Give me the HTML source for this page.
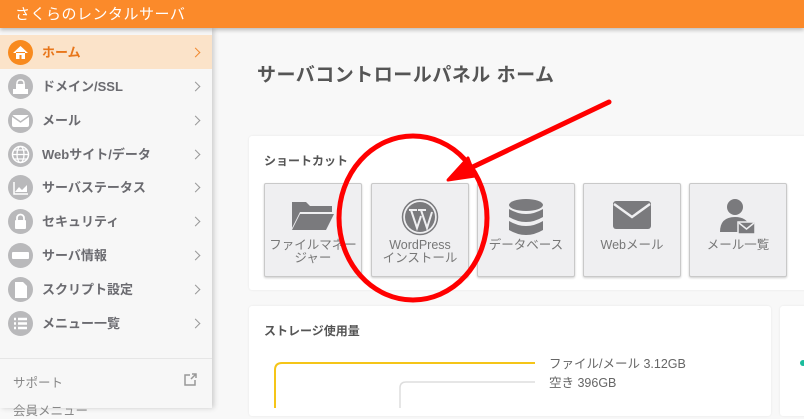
<!DOCTYPE html>
<html><head><meta charset="utf-8"><style>
*{margin:0;padding:0;box-sizing:border-box}
body{width:804px;height:408px;overflow:hidden;background:#f8f8f8;font-family:"Liberation Sans","Noto Sans CJK JP",sans-serif;position:relative}
.hd{position:absolute;left:0;top:0;width:804px;height:28px;background:#fb8a2a;box-shadow:0 2px 4px rgba(0,0,0,.25);z-index:3}
.hd span{position:absolute;left:15px;top:3px;color:#fff;font-size:15px;letter-spacing:.5px}
.sb{position:absolute;left:0;top:28px;width:212px;height:380px;background:#f7f7f7;box-shadow:2px 0 5px rgba(0,0,0,.18);z-index:2}
.it{position:absolute;left:0;width:212px;height:34px}
.it .ic{position:absolute;left:8px;top:5px;width:25px;height:25px;border-radius:50%;background:#b9b9bb}
.it .ic svg{position:absolute;left:0;top:0}
.it .tx{position:absolute;left:42px;top:7px;font-size:13px;font-weight:bold;color:#6b6b70}
.it .ch{position:absolute;left:192px;top:14px;width:7px;height:7px;border-top:1.5px solid #999;border-right:1.5px solid #999;transform:rotate(45deg)}
.it.on{background:#fbe3c9}
.it.on .ic{background:#f88a1e}.it.on .tx{color:#e8761a}.it.on .ch{border-color:#f08a30}
h1{position:absolute;left:257px;top:60px;font-size:19px;color:#555;font-weight:bold;letter-spacing:.5px}
.card{position:absolute;background:#fff;border-radius:3px;box-shadow:0 0 2px rgba(0,0,0,.08)}
.ct{position:absolute;font-size:12px;font-weight:bold;color:#555}
.bt{position:absolute;top:183px;width:98px;height:94px;background:#efeff1;border:1px solid #c9c9c9;border-radius:2px;box-shadow:0 1px 2px rgba(0,0,0,.2);text-align:center}
.bt svg{position:absolute;left:50%;transform:translateX(-50%);top:14px}
.bt .l{position:absolute;left:0;right:0;top:55px;font-size:12.5px;line-height:13px;color:#777}
</style></head><body>
<div class="hd"><span>さくらのレンタルサーバ</span></div>
<div class="sb">
<div class="it on" style="top:7px"><div class="ic"><svg width="25" height="25"><path d="M5 13L12.5 6L20 13M8 12v7h3.5v-4h2v4H17v-7" fill="#fff"/></svg></div><div class="tx">ホーム</div><div class="ch"></div></div>
<div class="it" style="top:41px"><div class="ic"><svg width="25" height="25"><rect x="9" y="6" width="7" height="7" rx="3" fill="none" stroke="#fff" stroke-width="1.5"/><rect x="8" y="10" width="9" height="5" fill="#fff"/><rect x="5" y="15" width="15" height="5" fill="#fff"/></svg></div><div class="tx">ドメイン/SSL</div><div class="ch"></div></div>
<div class="it" style="top:75px"><div class="ic"><svg width="25" height="25"><rect x="4" y="7" width="17" height="12" rx="2" fill="#fff"/><path d="M4 8l8.5 6L21 8" fill="none" stroke="#b9b9bb" stroke-width="1.5"/></svg></div><div class="tx">メール</div><div class="ch"></div></div>
<div class="it" style="top:109px"><div class="ic"><svg width="25" height="25"><circle cx="12.5" cy="12.5" r="8" fill="none" stroke="#fff" stroke-width="1.5"/><ellipse cx="12.5" cy="12.5" rx="3.5" ry="8" fill="none" stroke="#fff" stroke-width="1.3"/><path d="M4.5 12.5h16M6 8h13M6 17h13" stroke="#fff" stroke-width="1.3"/></svg></div><div class="tx">Webサイト/データ</div><div class="ch"></div></div>
<div class="it" style="top:142px"><div class="ic"><svg width="25" height="25"><path d="M6 7v12h14" fill="none" stroke="#fff" stroke-width="1.5"/><path d="M7 17l4-5 3 3 5-5v7H7z" fill="#fff"/></svg></div><div class="tx">サーバステータス</div><div class="ch"></div></div>
<div class="it" style="top:176px"><div class="ic"><svg width="25" height="25"><path d="M9 12V9a3.5 3.5 0 0 1 7 0v3" fill="none" stroke="#fff" stroke-width="1.8"/><rect x="7" y="11" width="11" height="9" rx="1" fill="#fff"/></svg></div><div class="tx">セキュリティ</div><div class="ch"></div></div>
<div class="it" style="top:210px"><div class="ic"><svg width="25" height="25"><rect x="4" y="9" width="17" height="7" rx="1" fill="#fff"/></svg></div><div class="tx">サーバ情報</div><div class="ch"></div></div>
<div class="it" style="top:244px"><div class="ic"><svg width="25" height="25"><path d="M7 5h8l4 4v12H7z" fill="#fff"/></svg></div><div class="tx">スクリプト設定</div><div class="ch"></div></div>
<div class="it" style="top:278px"><div class="ic"><svg width="25" height="25"><path d="M6 8h2M6 12.5h2M6 17h2M10 8h9M10 12.5h9M10 17h9" stroke="#fff" stroke-width="2.5"/></svg></div><div class="tx">メニュー一覧</div><div class="ch"></div></div>
<div style="position:absolute;left:0;top:330px;width:212px;border-top:1px solid #e6e6e6"></div>
<div style="position:absolute;left:13px;top:344px;font-size:12.5px;color:#888">サポート</div>
<div style="position:absolute;left:13px;top:372px;font-size:12.5px;color:#888">会員メニュー</div>
<svg style="position:absolute;left:183px;top:345px" width="14" height="14"><path d="M7 2H2v10h10V7M8 6l5-5M9 1h4v4" fill="none" stroke="#999" stroke-width="1.5"/></svg>
</div>
<h1>サーバコントロールパネル ホーム</h1>
<div class="card" style="left:249px;top:136px;width:560px;height:154px"></div>
<div class="ct" style="left:264px;top:152px">ショートカット</div>
<div class="bt" style="left:264px"><svg width="46" height="34"><path d="M2 4h14l4 4h22v6H10L2 30z" fill="#7a7a7d"/><path d="M10 16h34l-8 16H2z" fill="#7a7a7d"/></svg><div class="l">ファイルマネー<br>ジャー</div></div>
<div class="bt" style="left:371px"><svg width="38" height="38" viewBox="0 0 38 38"><circle cx="19" cy="19" r="17.5" fill="none" stroke="#7a7a7d" stroke-width="1.5"/><circle cx="19" cy="19" r="15" fill="#7a7a7d"/><path d="M8 12h8M10 12l6 18 4-12M17 12h8M20 12l6 18 5-16" fill="none" stroke="#efeff1" stroke-width="2"/></svg><div class="l">WordPress<br>インストール</div></div>
<div class="bt" style="left:477px"><svg width="36" height="40"><ellipse cx="18" cy="7" rx="17" ry="6" fill="#7a7a7d"/><path d="M1 11q17 10 34 0v8q-17 10-34 0zM1 23q17 10 34 0v9q-17 10-34 0z" fill="#7a7a7d"/></svg><div class="l">データベース</div></div>
<div class="bt" style="left:583px"><svg width="40" height="32"><rect x="1" y="3" width="38" height="28" rx="3" fill="#7a7a7d"/><path d="M2 6l18 13L38 6" fill="none" stroke="#efeff1" stroke-width="2.5"/></svg><div class="l">Webメール</div></div>
<div class="bt" style="left:689px"><svg width="40" height="38"><circle cx="17" cy="9" r="8" fill="#7a7a7d"/><path d="M2 34q0-15 15-15q12 0 15 10v5z" fill="#7a7a7d"/><rect x="20" y="24" width="17" height="12" fill="#7a7a7d" stroke="#efeff1" stroke-width="1.5"/><path d="M21 25l7.5 6 7.5-6" fill="none" stroke="#efeff1" stroke-width="1.5"/></svg><div class="l">メール一覧</div></div>
<div class="card" style="left:249px;top:306px;width:522px;height:110px"></div>
<div class="card" style="left:780px;top:306px;width:40px;height:110px"></div>
<div class="ct" style="left:264px;top:322px">ストレージ使用量</div>
<div style="position:absolute;left:549px;top:355px;font-size:12.5px;color:#666;line-height:19px">ファイル/メール 3.12GB<br>空き 396GB</div>
<svg style="position:absolute;left:0;top:0" width="804" height="408">
<path d="M535 363H282q-7 0-7 7v40" fill="none" stroke="#f5c518" stroke-width="2"/>
<path d="M535 382H406q-6 0-6 6v22" fill="none" stroke="#ddd" stroke-width="1.5"/>
<circle cx="803" cy="363" r="3" fill="#1abc9c"/>
<ellipse cx="413" cy="218" rx="74" ry="82" fill="none" stroke="#f00" stroke-width="5"/>
<path d="M609 102L458 174" stroke="#f00" stroke-width="5" stroke-linecap="round"/>
<path d="M448 180L468 158L475 176z" fill="#f00" stroke="#f00" stroke-width="3" stroke-linejoin="round"/>
</svg>
</body></html>
